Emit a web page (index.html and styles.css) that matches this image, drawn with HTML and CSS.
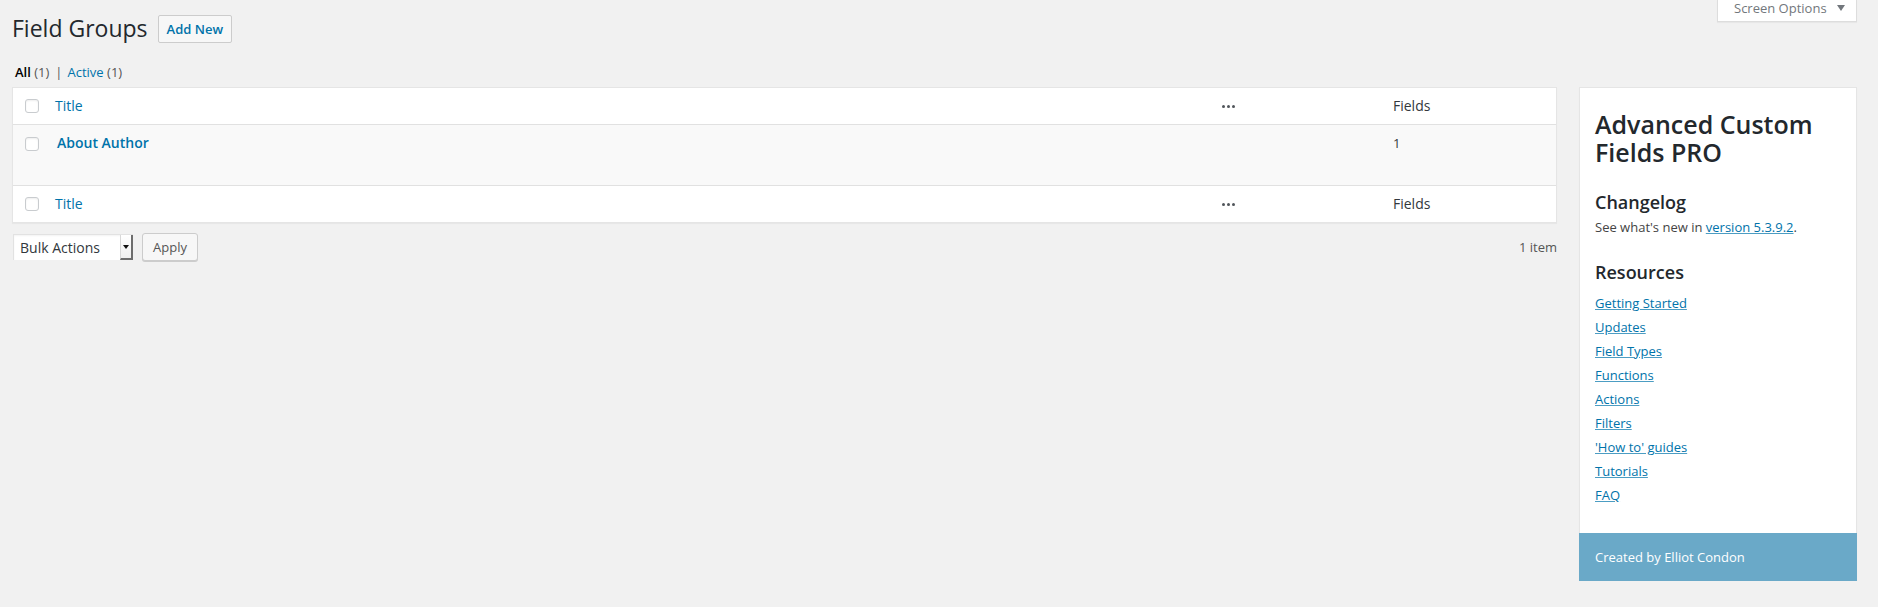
FILE: index.html
```html
<!DOCTYPE html>
<html lang="en">
<head>
<meta charset="utf-8">
<title>Field Groups</title>
<link rel="stylesheet" href="styles.css">
</head>
<body>
<div class="screen-meta-links">
  <button class="show-settings" type="button">Screen Options<span class="tab-arrow"></span></button>
</div>
<div class="wrap">
  <div class="title-row">
    <h1 class="page-title">Field Groups</h1>
    <a class="page-title-action" href="#">Add New</a>
  </div>
  <ul class="subsubsub">
    <li class="current">All <span class="count">(1)</span></li>
    <li class="sep">|</li>
    <li><a href="#">Active</a> <span class="count">(1)</span></li>
  </ul>
  <div class="columns">
    <div class="main-col">
      <table class="widefat">
        <colgroup>
          <col class="col-cb">
          <col>
          <col class="col-desc">
          <col class="col-fields">
        </colgroup>
        <thead>
          <tr>
            <th class="check-column"><input type="checkbox" class="cb"></th>
            <th><a href="#">Title</a></th>
            <th><svg class="dots" width="13" height="3" viewBox="0 0 13 3"><circle cx="1.5" cy="1.5" r="1.5"/><circle cx="6.5" cy="1.5" r="1.5"/><circle cx="11.5" cy="1.5" r="1.5"/></svg></th>
            <th>Fields</th>
          </tr>
        </thead>
        <tbody>
          <tr class="alt">
            <th class="check-column body-cb"><input type="checkbox" class="cb"></th>
            <td><strong class="row-title"><a href="#">About Author</a></strong><div class="row-actions"></div></td>
            <td></td>
            <td class="num">1</td>
          </tr>
        </tbody>
        <tfoot>
          <tr>
            <th class="check-column"><input type="checkbox" class="cb"></th>
            <th><a href="#">Title</a></th>
            <th><svg class="dots" width="13" height="3" viewBox="0 0 13 3"><circle cx="1.5" cy="1.5" r="1.5"/><circle cx="6.5" cy="1.5" r="1.5"/><circle cx="11.5" cy="1.5" r="1.5"/></svg></th>
            <th>Fields</th>
          </tr>
        </tfoot>
      </table>
      <div class="tablenav">
        <div class="bulkactions">
          <div class="select-wrap">
            <span class="select-label">Bulk Actions</span>
            <span class="select-arrow"><span class="tri"></span></span>
          </div>
          <button class="button" type="button">Apply</button>
        </div>
        <span class="displaying-num">1 item</span>
      </div>
    </div>
    <aside class="acf-box">
      <div class="inner">
        <h2 class="box-title">Advanced Custom Fields PRO</h2>
        <h3 class="box-h">Changelog</h3>
        <p class="box-p">See what's new in <a href="#">version 5.3.9.2</a>.</p>
        <h3 class="box-h res">Resources</h3>
        <ul class="links">
          <li><a href="#">Getting Started</a></li>
          <li><a href="#">Updates</a></li>
          <li><a href="#">Field Types</a></li>
          <li><a href="#">Functions</a></li>
          <li><a href="#">Actions</a></li>
          <li><a href="#">Filters</a></li>
          <li><a href="#">'How to' guides</a></li>
          <li><a href="#">Tutorials</a></li>
          <li><a href="#">FAQ</a></li>
        </ul>
      </div>
      <div class="footer">Created by Elliot Condon</div>
    </aside>
  </div>
</div>
</body>
</html>
```
FILE: styles.css
```css
html, body {
  margin: 0;
  padding: 0;
  background: #f1f1f1;
}
body {
  font-family: "Open Sans", "Liberation Sans", sans-serif;
  font-size: 13px;
  color: #444;
  line-height: 1.4;
}
a {
  color: #0073aa;
  text-decoration: none;
}

/* Screen options tab */
.screen-meta-links {
  float: right;
  margin-right: 21px;
}
.show-settings {
  display: flex;
  align-items: flex-start;
  box-sizing: border-box;
  width: 140px;
  height: 22px;
  margin: 0;
  padding: 0 0 0 16px;
  background: #fff;
  border: 1px solid #ddd;
  border-top: none;
  box-shadow: 0 1px 1px rgba(0,0,0,.04);
  font-family: "Open Sans", "Liberation Sans", sans-serif;
  font-size: 13px;
  line-height: 17px;
  color: #72777c;
  cursor: pointer;
}
.tab-arrow {
  width: 0;
  height: 0;
  margin: 5px 0 0 10px;
  border-left: 4px solid transparent;
  border-right: 4px solid transparent;
  border-top: 6px solid #72777c;
}

/* Wrap */
.wrap {
  padding: 14px 21px 0 12px;
}
.title-row {
  display: flex;
  align-items: center;
  height: 29px;
}
.page-title {
  margin: 0;
  font-size: 23px;
  font-weight: 400;
  line-height: 29px;
  color: #23282d;
}
.page-title-action {
  margin-left: 10px;
  padding: 4px 8px;
  border: 1px solid #ccc;
  border-radius: 2px;
  background: #f7f7f7;
  font-size: 13px;
  font-weight: 600;
  line-height: 18px;
  color: #0073aa;
}

.subsubsub {
  list-style: none;
  margin: 16px 0 0;
  padding: 0 0 0 3px;
  display: flex;
  height: 26px;
  line-height: 26px;
  font-size: 13px;
  color: #666;
}
.subsubsub li {
  white-space: pre;
}
.subsubsub .current {
  color: #000;
  font-weight: 600;
}
.subsubsub .count {
  color: #555;
  font-weight: 400;
}
.subsubsub .sep {
  padding: 0 5px 0 6px;
  color: #555;
}

/* Columns */
.columns {
  display: flex;
  align-items: flex-start;
  gap: 22px;
  margin-top: 2px;
}
.main-col {
  flex: 1;
  min-width: 0;
}

/* Table */
.widefat {
  width: 100%;
  table-layout: fixed;
  border-spacing: 0;
  border: 1px solid #e5e5e5;
  background: #fff;
  box-shadow: 0 1px 1px rgba(0,0,0,.04);
}
.col-cb { width: 32px; }
.col-desc { width: 171px; }
.col-fields { width: 173px; }
.widefat th,
.widefat td {
  padding: 8px 10px;
  text-align: left;
  vertical-align: top;
  font-weight: 400;
}
.widefat thead th,
.widefat tfoot th {
  font-size: 14px;
  line-height: 20px;
  height: 20px;
  color: #32373c;
}
.widefat thead th {
  border-bottom: 1px solid #e1e1e1;
}
.widefat tfoot th {
  border-top: 1px solid #e1e1e1;
}
.widefat th.check-column {
  padding: 11px 0 0 12px;
}
.widefat th.body-cb {
  padding-top: 12px;
}
.cb {
  -webkit-appearance: none;
  appearance: none;
  display: block;
  box-sizing: border-box;
  width: 14px;
  height: 14px;
  margin: 0;
  border: 1px solid #c9cccf;
  border-radius: 3px;
  background: #fff;
  box-shadow: inset 0 1px 2px rgba(0,0,0,.07);
}
.dots {
  display: block;
  margin-top: 9px;
  fill: #50555a;
}
tr.alt {
  background: #f9f9f9;
}
.widefat td {
  font-size: 13px;
  line-height: 20px;
  color: #32373c;
}
.row-title {
  display: block;
  padding-left: 2px;
  font-size: 14px;
  font-weight: 600;
}
.row-actions {
  height: 24px;
}

/* Tablenav */
.tablenav {
  display: flex;
  justify-content: space-between;
  align-items: center;
  height: 28px;
  margin-top: 10px;
}
.bulkactions {
  display: flex;
  align-items: center;
  gap: 9px;
  padding-left: 1px;
}
.select-wrap {
  display: flex;
  box-sizing: border-box;
  width: 120px;
  height: 26px;
  background: #fff;
  border: 1px solid #e2e2e2;
  border-right: none;
  border-bottom: none;
  box-shadow: inset 0 1px 2px rgba(0,0,0,.05);
}
.select-label {
  flex: 1;
  padding-left: 6px;
  font-size: 14px;
  line-height: 25px;
  color: #32373c;
  font-family: "Open Sans", "Liberation Sans", sans-serif;
}
.select-arrow {
  display: flex;
  justify-content: center;
  align-items: center;
  box-sizing: border-box;
  width: 13px;
  height: 25px;
  border-left: 1px solid #d8d8d8;
  border-right: 2px solid #6d6d6d;
  border-bottom: 2px solid #6d6d6d;
  background: linear-gradient(#fff, #f0f0f0);
}
.tri {
  width: 0;
  height: 0;
  margin-right: 1px;
  border-left: 3px solid transparent;
  border-right: 3px solid transparent;
  border-top: 4px solid #111;
}
.button {
  box-sizing: border-box;
  height: 28px;
  margin: 0;
  padding: 0 10px 1px;
  border: 1px solid #ccc;
  border-radius: 3px;
  background: #f7f7f7;
  box-shadow: 0 1px 0 #ccc;
  font-family: "Open Sans", "Liberation Sans", sans-serif;
  font-size: 13px;
  line-height: 26px;
  color: #555;
  cursor: pointer;
}
.displaying-num {
  font-size: 13px;
  line-height: 28px;
  color: #555;
}

/* ACF sidebar box */
.acf-box {
  flex: 0 0 278px;
  box-sizing: border-box;
  width: 278px;
  background: #fff;
  border: 1px solid #e5e5e5;
  box-shadow: 0 1px 1px rgba(0,0,0,.04);
}
.acf-box .inner {
  padding: 22px 15px 26px;
}
.box-title {
  margin: 0;
  font-size: 25px;
  line-height: 28px;
  font-weight: 600;
  color: #23282d;
}
.box-h {
  margin: 25px 0 0;
  font-size: 18px;
  line-height: 22px;
  font-weight: 600;
  color: #23282d;
}
.box-h.res {
  margin-top: 24px;
}
.box-p {
  margin: 4px 0 0;
  font-size: 13px;
  line-height: 20px;
  color: #444;
}
.box-p a,
.links a {
  text-decoration: underline;
  text-decoration-color: rgba(0,115,170,.7);
}
.links {
  list-style: none;
  margin: 8px 0 0;
  padding: 0;
}
.links li {
  font-size: 13px;
  line-height: 24px;
  height: 24px;
}
.acf-box .footer {
  margin: 0 -1px -1px;
  padding: 15px 16px;
  background: #6aa9c8;
  color: #fff;
  font-size: 13px;
  line-height: 18px;
}
```
